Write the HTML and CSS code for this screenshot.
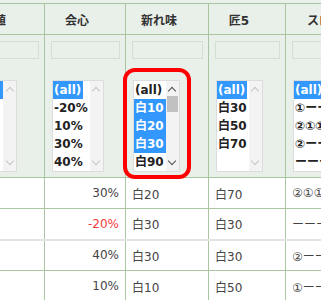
FILE: index.html
```html
<!DOCTYPE html>
<html lang="ja">
<head>
<meta charset="utf-8">
<title>table</title>
<link rel="stylesheet" href="styles.css">
</head>
<body>
<div class="wrap">
<table class="grid">
  <colgroup>
    <col class="c0"><col class="c1"><col class="c2"><col class="c3"><col class="c4">
  </colgroup>
  <thead>
    <tr class="head">
      <th>属性値</th><th>会心</th><th>新れ味</th><th>匠5</th><th>スロット</th>
    </tr>
    <tr class="filter">
      <td>
        <div class="inp"></div>
        <div class="lb lb-wide">
          <div class="opts">
            <div class="opt sel">(all)</div><div class="opt">火30</div><div class="opt">水20</div><div class="opt">雷20</div><div class="opt">氷30</div>
          </div>
          <div class="bar off"><span class="arr up"></span><span class="arr dn"></span></div>
        </div>
      </td>
      <td>
        <div class="inp"></div>
        <div class="lb">
          <div class="opts">
            <div class="opt sel">(all)</div><div class="opt">-20%</div><div class="opt">10%</div><div class="opt">30%</div><div class="opt">40%</div>
          </div>
          <div class="bar off"><span class="arr up"></span><span class="arr dn"></span></div>
        </div>
      </td>
      <td class="marked">
        <div class="inp"></div>
        <div class="lb">
          <div class="opts">
            <div class="opt">(all)</div><div class="opt sel">白10</div><div class="opt sel">白20</div><div class="opt sel">白30</div><div class="opt">白90</div>
          </div>
          <div class="bar"><span class="arr up"></span><span class="thumb"></span><span class="arr dn"></span></div>
        </div>
        <div class="ring"></div>
      </td>
      <td>
        <div class="inp"></div>
        <div class="lb">
          <div class="opts">
            <div class="opt sel">(all)</div><div class="opt">白30</div><div class="opt">白50</div><div class="opt">白70</div>
          </div>
          <div class="bar off"><span class="arr up"></span><span class="arr dn"></span></div>
        </div>
      </td>
      <td>
        <div class="inp"></div>
        <div class="lb">
          <div class="opts">
            <div class="opt sel">(all)</div><div class="opt">①ーーー</div><div class="opt">②①①</div><div class="opt">②ーーー</div><div class="opt">ーーーー</div>
          </div>
          <div class="bar off"><span class="arr up"></span><span class="arr dn"></span></div>
        </div>
      </td>
    </tr>
  </thead>
  <tbody>
    <tr><td></td><td class="num">30%</td><td>白20</td><td>白70</td><td>②①①</td></tr>
    <tr><td></td><td class="num neg">-20%</td><td>白30</td><td>白30</td><td>ーーー</td></tr>
    <tr class="grp"><td></td><td class="num">40%</td><td>白30</td><td>白30</td><td>②ーー</td></tr>
    <tr><td></td><td class="num">10%</td><td>白10</td><td>白50</td><td>①ーー</td></tr>
  </tbody>
</table>
</div>
</body>
</html>
```

FILE: styles.css
```css
* { box-sizing: border-box; }
html, body { margin: 0; padding: 0; }
body {
  width: 321px;
  height: 300px;
  overflow: hidden;
  background: #fff;
  font-family: "DejaVu Sans", "Noto Sans CJK JP", sans-serif;
  color: #444;
}
.wrap {
  margin-left: -53px;
  padding-top: 3px;
  background: #e9efe9;
  width: 460px;
}
.grid {
  border-collapse: collapse;
  table-layout: fixed;
  width: 445px;
}
col.c0 { width: 97px; }
col.c1 { width: 81px; }
col.c2 { width: 83px; }
col.c3 { width: 77px; }
col.c4 { width: 107px; }

.grid th, .grid td {
  border: 1px solid #a9c5a1;
}
.head th {
  height: 31px;
  padding: 0 16px 0 0;
  background: #e9efe9;
  font-size: 12px;
  font-weight: bold;
  color: #333;
  text-align: center;
  white-space: nowrap;
  overflow: hidden;
}
.filter td {
  height: 143px;
  background: #e9efe9;
  vertical-align: top;
  padding: 6px 5px 0 6px;
  white-space: nowrap;
}
.marked { position: relative; }
.inp {
  height: 18px;
  border: 1px solid #d5ddd5;
  margin-bottom: 21px;
}
.lb {
  display: inline-flex;
  height: 92px;
  border: 1px solid #dcdcdc;
  background: #fff;
  margin-left: 1px;
  overflow: hidden;
  vertical-align: top;
}
.lb-wide { width: 62px; }
.opts {
  display: flex;
  flex-direction: column;
  align-items: flex-start;
  flex: 1 1 auto;
}
.lb-wide .opts { align-items: stretch; }
.opt {
  height: 18px;
  line-height: 18px;
  padding: 0 2px 0 1px;
  font-size: 12px;
  font-weight: bold;
  color: #222;
  white-space: nowrap;
}
.opt.sel {
  background: #3298fd;
  color: #fff;
}
.bar {
  flex: 0 0 13px;
  width: 13px;
  background: #f3f3f3;
  display: flex;
  flex-direction: column;
  align-items: center;
  padding: 4px 0 4px;
}
.thumb {
  width: 11px;
  height: 16px;
  margin-top: 2px;
  background: #c1c1c1;
}
.arr {
  width: 6px;
  height: 6px;
  border-left: 1.5px solid #505050;
  border-top: 1.5px solid #505050;
}
.arr.up { transform: rotate(45deg); margin-top: 3px; }
.arr.dn { transform: rotate(225deg); margin-top: auto; margin-bottom: 3px; }
.bar.off .arr { border-color: #c6c6c6; }

.ring {
  position: absolute;
  left: -3px;
  top: 33px;
  width: 68px;
  height: 111px;
  border: 4px solid #f00;
  border-radius: 12px;
  pointer-events: none;
}

tbody td {
  height: 31px;
  padding: 0 6px;
  font-size: 12px;
  color: #444;
  background: #fff;
  white-space: nowrap;
  overflow: hidden;
}
tbody td.num { text-align: right; }
tbody td.neg { color: #f43b3b; }
tbody tr.grp td { border-top: 2px solid #dfe5df; }
```
